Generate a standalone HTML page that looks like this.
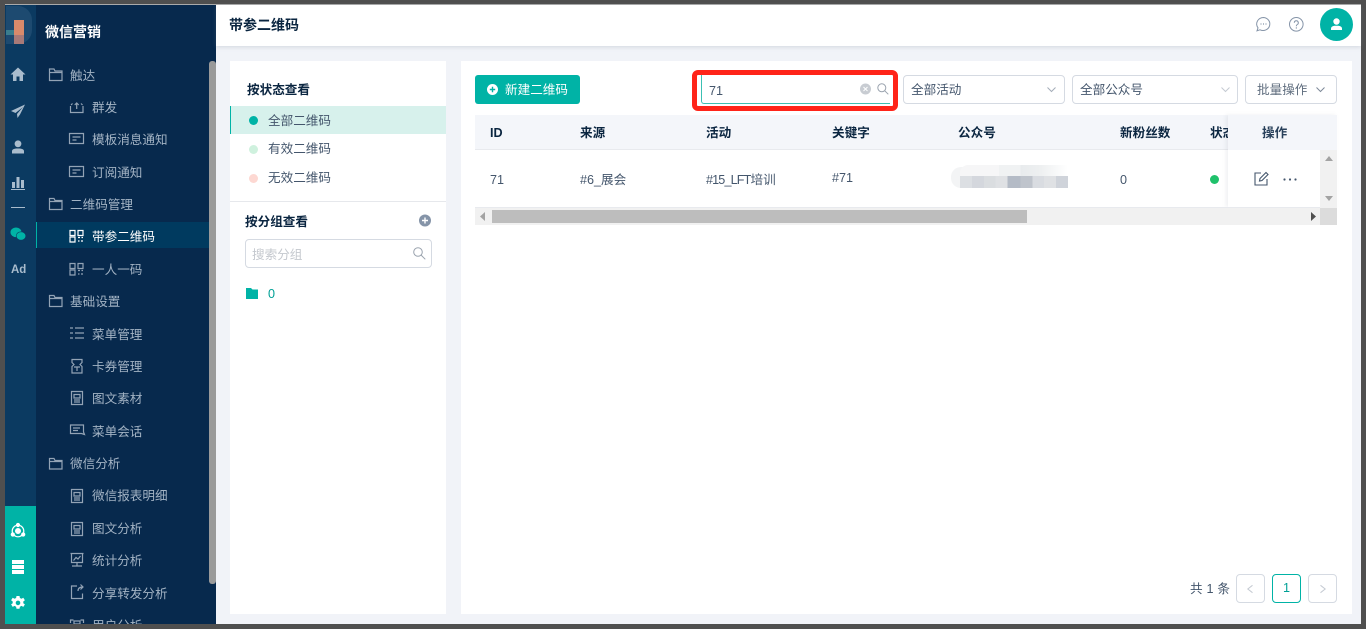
<!DOCTYPE html>
<html lang="zh"><head><meta charset="utf-8"><title>带参二维码</title>
<style>
*{box-sizing:border-box}
html,body{margin:0;padding:0;width:1366px;height:629px;overflow:hidden;background:#4f4f4f}
body{position:relative;font-family:"Liberation Sans","Noto Sans CJK SC",sans-serif;font-size:13px;color:#44566c}
.a{position:absolute}
.t{position:absolute;white-space:nowrap;line-height:20px;height:20px;margin-top:1px}
.t.n{margin-top:0}
svg{position:absolute;overflow:visible}
.m{color:#a3b3c4;font-size:12.6px}
.h{color:#0a2540;font-weight:bold;font-size:12.6px}
.c{color:#44566c;font-size:12.6px}
.box{position:absolute;background:#fff;border:1px solid #d5dae2;border-radius:4px}
.ic{fill:none;stroke:#93a3b5;stroke-width:1.2}
.r{fill:#a9bccd}
</style></head><body>
<div class="a" style="left:5px;top:4px;width:1356px;height:620px;background:#f1f3f8;overflow:hidden"></div>
<div class="a" style="left:5px;top:4px;width:1356px;height:1px;background:#aaa"></div>

<!-- rail -->
<div class="a" style="left:5px;top:5px;width:31px;height:619px;background:#0b3a61"></div>
<div class="a" style="left:5px;top:506px;width:31px;height:118px;background:#00b3a6"></div>
<div class="a" style="left:6px;top:6px;width:26px;height:38px;background:#1d4a70;border-radius:0 14px 14px 0"></div>
<div class="a" style="left:6px;top:30px;width:8px;height:5px;background:#3a7d8d"></div>
<div class="a" style="left:14px;top:20px;width:10px;height:15px;background:#d98a6b"></div>
<div class="a" style="left:14px;top:35px;width:10px;height:9px;background:#a87a78"></div>
<svg style="left:10px;top:67px" width="16" height="15"><path class="r" d="M8 0.500 0.500 7.500H3V14H6.500V9.500H9.500V14H13V7.500H15.500Z"/></svg>
<svg style="left:10px;top:104px" width="16" height="15"><path class="r" d="M15 0.500 1 7 5.500 9 13 3 7 10 7.500 14 10 10.500Z"/></svg>
<svg style="left:11px;top:140px" width="14" height="14"><circle class="r" cx="7" cy="3.800" r="3.400"/><path class="r" d="M1 13.500V11Q1 9 5 8.500H9Q13 9 13 11V13.500Z"/></svg>
<svg style="left:11px;top:176px" width="14" height="14"><path class="r" d="M1 6h3v6H1zM5.500 1h3v11h-3zM10 4h3v8h-3zM0 13h14v1H0z"/></svg>
<div class="a" style="left:11px;top:207px;width:14px;height:1px;background:#a9bccd"></div>
<svg style="left:10px;top:227px" width="16" height="14"><ellipse cx="6" cy="5.300" rx="5.500" ry="4.800" fill="#00b3a6"/><ellipse cx="11" cy="9" rx="4.800" ry="4.200" fill="#00b3a6" stroke="#0b3a61" stroke-width=".6"/></svg>
<div class="t" style="left:11px;top:259px;color:#a9bccd;font-weight:bold;font-size:11.5px">Ad</div>
<svg style="left:11px;top:523px" width="14" height="16" fill="none" stroke="#fff" stroke-width="1.200"><circle cx="7" cy="8" r="5.800"/><circle cx="7" cy="8" r="2.400" fill="#fff"/><circle cx="7" cy="2" r="1.500" fill="#fff"/><circle cx="1.800" cy="11.500" r="1.500" fill="#fff"/><circle cx="12.200" cy="11.500" r="1.500" fill="#fff"/></svg>
<svg style="left:12px;top:560px" width="12" height="14" fill="#fff"><rect width="12" height="4"/><rect y="5" width="12" height="4"/><rect y="10" width="12" height="4"/></svg>
<svg style="left:11px;top:596px" width="14" height="14"><path fill="#fff" d="M5.500 0h3l.4 2 1.600.8 1.800-1 1.600 2.500-1.600 1.200v1.700l1.600 1.200-1.600 2.500-1.800-1-1.600.8-.4 2h-3l-.4-2-1.600-.8-1.800 1L.1 8.400l1.600-1.200V5.500L.1 4.300l1.600-2.500 1.800 1 1.600-.8z"/><circle cx="7" cy="6.900" r="2.300" fill="#00b3a6"/></svg>

<!-- sidebar -->
<div class="a" style="left:36px;top:5px;width:180px;height:619px;background:#07294d;overflow:hidden">
  <div class="a" style="left:0;top:217px;width:173px;height:26px;background:#003a5f;border-left:1px solid #00b3a6"></div>
  <div class="a" style="left:173px;top:56px;width:7px;height:523px;background:#9a9a9a;border-radius:3px"></div>
  <div class="t n" style="left:9px;top:17px;color:#fff;font-weight:bold;font-size:14px">微信营销</div>
  <div class="t m" style="left:34px;top:60px">触达</div>
  <div class="t m" style="left:56px;top:92px">群发</div>
  <div class="t m" style="left:56px;top:124px">模板消息通知</div>
  <div class="t m" style="left:56px;top:157px">订阅通知</div>
  <div class="t m" style="left:34px;top:189px">二维码管理</div>
  <div class="t" style="left:56px;top:221px;color:#fff;font-size:12.600px">带参二维码</div>
  <div class="t m" style="left:56px;top:254px">一人一码</div>
  <div class="t m" style="left:34px;top:286px">基础设置</div>
  <div class="t m" style="left:56px;top:319px">菜单管理</div>
  <div class="t m" style="left:56px;top:351px">卡券管理</div>
  <div class="t m" style="left:56px;top:383px">图文素材</div>
  <div class="t m" style="left:56px;top:416px">菜单会话</div>
  <div class="t m" style="left:34px;top:448px">微信分析</div>
  <div class="t m" style="left:56px;top:480px">微信报表明细</div>
  <div class="t m" style="left:56px;top:513px">图文分析</div>
  <div class="t m" style="left:56px;top:545px">统计分析</div>
  <div class="t m" style="left:56px;top:578px">分享转发分析</div>
  <div class="t m" style="left:56px;top:610px">用户分析</div>
  <svg style="left:0;top:0" width="180" height="619" class="ic">
    <path d="M13.500 64v11.500h12.500v-9.500h-7l-1-2zM13.500 67.500h12.500"/>
    <path d="M13.500 193.500v11h12.500v-9h-7l-1-2zM13.500 196.500h12.500"/>
    <path d="M13.500 290.500v11h12.500v-9h-7l-1-2zM13.500 293.500h12.500"/>
    <path d="M13.500 453.500v10.500h12.500v-8.500h-7l-1-2zM13.500 456.500h12.500"/>
    <path d="M34.500 101v6.500h12.500v-6.500M40.700 104v-6M38.700 100l2-2 2 2M35 100l1.500-1.500M46.500 100l-1.500-1.500"/>
    <path d="M33.500 128.500h14v10h-14zM36.500 132h8M36.500 135h4"/>
    <path d="M33.500 161.500h14v10h-14zM36.500 165h8M36.500 168h4"/>
    <path stroke="#fff" d="M34 225.500h5v5h-5zM42 225.500h5v5h-5zM34 232h5v5h-5zM42 232.500h2M45.500 232.500h1.500M42 236h1.500M45 236h2"/>
    <path d="M34 258.500h5v5h-5zM42 258.500h5v5h-5zM34 265h5v5h-5zM42 265.500h2M45.500 265.500h1.500M42 269h1.500M45 269h2"/>
    <path d="M34 324h3M34 329h3M34 334h3M39 324h9M39 329h9M39 334h9" transform="translate(0,-1)"/>
    <path d="M36 354.500h10v3l-2 2 2 2v6.500h-10v-6.500l2-2-2-2zM38 362h6M41 362v4"/>
    <path d="M35.500 386.500h11v13h-11zM38 389.500h6v3.500h-6zM38 395h6M38 397h6"/>
    <path d="M34.500 420h13v7l1 2.500-3-1h-11zM37 423h7M37 425.500h5"/>
    <path d="M35.500 484.500h11v13h-11zM38 487.500h6v3.500h-6zM38 493h6M38 495h6"/>
    <path d="M35.500 517.500h11v13h-11zM38 520.500h6v3.500h-6zM38 526h6M38 528h6"/>
    <path d="M34.500 548.500h13M35.500 548.500v9h11v-9M41 557.500v3M36 561h10M37.500 555.500l2.500-3 2 1.500 2.500-3"/>
    <path d="M41 581h-5.500v12.500h11v-5M42 586q0-4 5-4M44.500 579.500l2.500 2.500-2.500 2.500"/>
    <path d="M34.500 618v-3h3M44.500 615h3v3M38 616h6v3h-6z"/>
  </svg>
</div>

<!-- header -->
<div class="a" style="left:216px;top:5px;width:1145px;height:41px;background:#fff;box-shadow:0 1px 4px rgba(120,130,150,.25)"></div>
<div class="t n" style="left:229px;top:15px;color:#0a2540;font-weight:bold;font-size:14px">带参二维码</div>
<svg style="left:1256px;top:17px" width="15" height="15" fill="none" stroke="#8594a8" stroke-width="1"><path d="M7.500 .5a6.800 6.500 0 1 1-3.500 12.300L1 13.800l1-3A6.800 6.500 0 0 1 7.500 .5z"/><path d="M4.500 7h1M7 7h1M9.500 7h1" stroke-width="1.200"/></svg>
<svg style="left:1289px;top:17px" width="15" height="15" fill="none" stroke="#8594a8" stroke-width="1"><circle cx="7.300" cy="7.300" r="6.800"/><path d="M5.300 5.800a2 2 0 1 1 3 1.700q-1 .6-1 1.700M7.300 10.300v1.300"/></svg>
<div class="a" style="left:1320px;top:8px;width:33px;height:33px;border-radius:50%;background:#00b3a6"></div>
<svg style="left:1330px;top:18px" width="13" height="13" fill="#fff"><circle cx="6.500" cy="3.500" r="3.200"/><path d="M1 12V10.500Q1 8.500 4.500 7.800H8.500Q12 8.500 12 10.500V12Z"/></svg>

<!-- left panel -->
<div class="a" style="left:230px;top:61px;width:216px;height:553px;background:#fff"></div>
<div class="t h" style="left:247px;top:79px">按状态查看</div>
<div class="a" style="left:230px;top:106px;width:216px;height:28px;background:#d7f1ec;border-left:1px solid #00b3a6"></div>
<div class="a" style="left:249px;top:116px;width:9px;height:9px;border-radius:50%;background:#00b3a6"></div>
<div class="a" style="left:249px;top:145px;width:9px;height:9px;border-radius:50%;background:#cff1de"></div>
<div class="a" style="left:249px;top:174px;width:9px;height:9px;border-radius:50%;background:#fdd8d2"></div>
<div class="t c" style="left:268px;top:110px">全部二维码</div>
<div class="t c" style="left:268px;top:138px">有效二维码</div>
<div class="t c" style="left:268px;top:167px">无效二维码</div>
<div class="a" style="left:230px;top:201px;width:216px;height:1px;background:#e6e8ec"></div>
<div class="t h" style="left:245px;top:211px">按分组查看</div>
<svg style="left:419px;top:214px" width="12" height="13"><circle cx="6" cy="6.500" r="6" fill="#8594a8"/><path d="M3 6.500h6M6 3.500v6" stroke="#fff" stroke-width="1.400"/></svg>
<div class="box" style="left:245px;top:239px;width:187px;height:29px"></div>
<div class="t" style="left:252px;top:244px;color:#c4c8ce;font-size:12.600px">搜索分组</div>
<svg style="left:413px;top:247px" width="13" height="13" fill="none" stroke="#9aa3ae" stroke-width="1"><circle cx="5" cy="5" r="4.300"/><path d="M8 8l4.300 4.300"/></svg>
<svg style="left:246px;top:288px" width="12" height="11"><path fill="#00b3a6" d="M0 0h5l1.500 1.500H12V11H0z"/></svg>
<div class="t" style="left:268px;top:283px;color:#00a096;font-size:12.600px">0</div>

<!-- main panel -->
<div class="a" style="left:461px;top:61px;width:891px;height:553px;background:#fff"></div>
<div class="a" style="left:475px;top:75px;width:105px;height:29px;background:#00b3a6;border-radius:3px"></div>
<svg style="left:487px;top:84px" width="11" height="11"><circle cx="5.500" cy="5.500" r="5.500" fill="#fff"/><path d="M2.800 5.500h5.400M5.500 2.800v5.400" stroke="#00b3a6" stroke-width="1.400"/></svg>
<div class="t" style="left:505px;top:79px;color:#fff;font-size:12.600px">新建二维码</div>

<div class="a" style="left:692px;top:70px;width:206px;height:41px;border:5px solid #ff2419;border-radius:6px;background:#fff"></div>
<div class="a" style="left:701px;top:75px;width:189px;height:29px;border-left:1px solid #3cc0b3;border-bottom:1px solid #3cc0b3;border-radius:0 0 0 3px;background:#fff"></div>
<div class="t" style="left:709px;top:80px;color:#44566c;font-size:12.600px">71</div>
<svg style="left:860px;top:83px" width="12" height="12"><circle cx="5.500" cy="6" r="5.500" fill="#c8ccd2"/><path d="M3.500 4l4 4M7.500 4l-4 4" stroke="#fff" stroke-width="1"/></svg>
<svg style="left:877px;top:83px" width="12" height="12" fill="none" stroke="#9aa3ae" stroke-width="1"><circle cx="4.800" cy="4.800" r="4"/><path d="M7.800 7.800l3.500 3.500"/></svg>

<div class="box" style="left:903px;top:75px;width:162px;height:29px"></div>
<div class="t" style="left:911px;top:79px;color:#44566c;font-size:12.600px">全部活动</div>
<svg style="left:1047px;top:87px" width="9" height="5" fill="none" stroke="#a4adb8"><path d="M.5 .5l4 4 4-4"/></svg>
<div class="box" style="left:1072px;top:75px;width:166px;height:29px"></div>
<div class="t" style="left:1080px;top:79px;color:#44566c;font-size:12.600px">全部公众号</div>
<svg style="left:1221px;top:87px" width="9" height="5" fill="none" stroke="#c4cad2"><path d="M.5 .5l4 4 4-4"/></svg>
<div class="box" style="left:1245px;top:75px;width:92px;height:29px"></div>
<div class="t" style="left:1257px;top:79px;color:#5f6d7e;font-size:12.600px">批量操作</div>
<svg style="left:1316px;top:87px" width="9" height="5" fill="none" stroke="#7d8998"><path d="M.5 .5l4 4 4-4"/></svg>

<!-- table -->
<div class="a" style="left:475px;top:115px;width:862px;height:35px;background:#f4f6fa;border-bottom:1px solid #e8eaee"></div>
<div class="t h" style="left:490px;top:122px;font-size:12.600px">ID</div>
<div class="t h" style="left:580px;top:122px">来源</div>
<div class="t h" style="left:706px;top:122px">活动</div>
<div class="t h" style="left:832px;top:122px">关键字</div>
<div class="t h" style="left:958px;top:122px">公众号</div>
<div class="t h" style="left:1120px;top:122px">新粉丝数</div>
<div class="t h" style="left:1210px;top:122px;width:18px;overflow:hidden">状态</div>
<div class="t c" style="left:490px;top:169px">71</div>
<div class="t c" style="left:580px;top:169px">#6_展会</div>
<div class="t c" style="left:706px;top:169px"><span style="letter-spacing:-.85px">#15_LFT</span>培训</div>
<div class="t c" style="left:832px;top:167px">#71</div>
<div class="t c" style="left:1120px;top:169px">0</div>
<div class="a" style="left:951px;top:167px;width:30px;height:21px;background:#f3f4f5;border-radius:10px 0 0 10px"></div>
<div class="a" style="left:960px;top:165px;width:108px;height:11px;background:linear-gradient(90deg,#f6f6f7 0,#f6f6f7 36%,#f0f2f3 36%,#f0f2f3 56%,#e8ebed 56%,#eef0f1 75%,#fff 100%);border-radius:8px 0 0 0"></div>
<div class="a" style="left:960px;top:176px;width:108px;height:12px;background:linear-gradient(90deg,#dcdfe3 0 11%,#d4d7dd 11% 22%,#dadde0 22% 33%,#dfe1e4 33% 44%,#b4bbc6 44% 56%,#bfc4cc 56% 67%,#d9dce1 67% 78%,#dfe1e4 78% 89%,#cfd3da 89% 100%)"></div>
<div class="a" style="left:1210px;top:175px;width:9px;height:9px;border-radius:50%;background:#1fc16b"></div>
<div class="a" style="left:1228px;top:115px;width:109px;height:92px;background:#f4f6fa;box-shadow:-2px 0 4px rgba(120,130,150,.12)"></div>
<div class="a" style="left:1228px;top:150px;width:92px;height:57px;background:#fff"></div>
<div class="t h" style="left:1262px;top:122px;color:#28405a">操作</div>
<svg style="left:1254px;top:171px" width="15" height="15" fill="none" stroke="#44566c" stroke-width="1.100"><path d="M7 2H1v12h12V8"/><path d="M5.500 10l.5-2.500L12 1.500l2 2-6 6z"/></svg>
<svg style="left:1283px;top:178px" width="14" height="3" fill="#44566c"><circle cx="1.500" cy="1.500" r="1.100"/><circle cx="7" cy="1.500" r="1.100"/><circle cx="12.500" cy="1.500" r="1.100"/></svg>
<!-- scrollbars -->
<div class="a" style="left:1320px;top:150px;width:17px;height:58px;background:#f1f1f1"></div>
<svg style="left:1324px;top:155px" width="10" height="50"><path fill="#a3a3a3" d="M1 6 5 1 9 6z"/><path fill="#a3a3a3" d="M1 41l4 5 4-5z"/></svg>
<div class="a" style="left:475px;top:207px;width:845px;height:18px;background:#f1f1f1;border-top:1px solid #e8eaee"></div>
<div class="a" style="left:492px;top:210px;width:535px;height:13px;background:#bdbdbd"></div>
<svg style="left:480px;top:212px" width="6" height="9"><path fill="#a3a3a3" d="M5 0v9L0 4.500z"/></svg>
<svg style="left:1310px;top:212px" width="6" height="9"><path fill="#505050" d="M1 0v9l5-4.500z"/></svg>
<div class="a" style="left:1320px;top:208px;width:17px;height:17px;background:#dcdcdc"></div>

<!-- pagination -->
<div class="t c" style="left:1190px;top:578px;letter-spacing:.2px">共 1 条</div>
<div class="box" style="left:1236px;top:574px;width:29px;height:29px"></div>
<svg style="left:1247px;top:585px" width="6" height="8" fill="none" stroke="#c4cad2"><path d="M5.500 .3.800 4l4.700 3.700"/></svg>
<div class="box" style="left:1272px;top:574px;width:29px;height:29px;border-color:#00b3a6"></div>
<div class="t" style="left:1283px;top:577px;color:#00a096;font-size:12.600px">1</div>
<div class="box" style="left:1308px;top:574px;width:29px;height:29px"></div>
<svg style="left:1320px;top:585px" width="6" height="8" fill="none" stroke="#c4cad2"><path d="M.5 .3 5.200 4 .5 7.700"/></svg>
</body></html>
